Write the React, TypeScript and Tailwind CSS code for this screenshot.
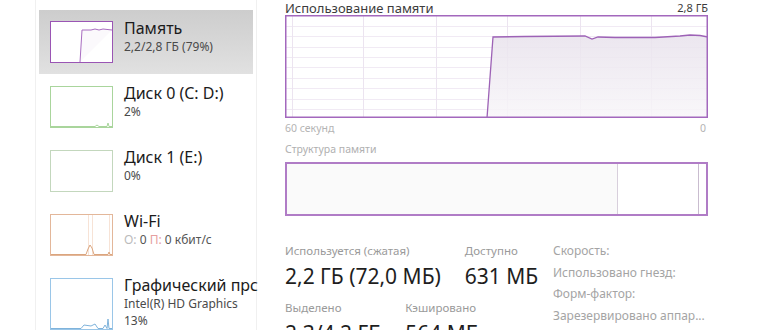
import React from 'react';

// sidebar entries of the performance tab
interface PerfItem {
  title: string;
  lines: string[];
  border: string;
  thumbH: string;
  kind: 'mem' | 'disk0' | 'disk1' | 'wifi' | 'gpu';
  selected?: boolean;
}

const items: PerfItem[] = [
  { title: 'Память', lines: ['2,2/2,8 ГБ (79%)'], border: 'border-[#9a55b4]', thumbH: 'h-[42px]', kind: 'mem', selected: true },
  { title: 'Диск 0 (C: D:)', lines: ['2%'], border: 'border-[#a9d59c]', thumbH: 'h-[42px]', kind: 'disk0' },
  { title: 'Диск 1 (E:)', lines: ['0%'], border: 'border-[#c3d7bd]', thumbH: 'h-[42px]', kind: 'disk1' },
  { title: 'Wi-Fi', lines: ['O: 0 П: 0 кбит/с'], border: 'border-[#e3b79a]', thumbH: 'h-[42px]', kind: 'wifi' },
  { title: 'Графический прс', lines: ['Intel(R) HD Graphics', '13%'], border: 'border-[#9ac6e8]', thumbH: 'h-[52px]', kind: 'gpu' },
];

const Thumb = ({ item }: { item: PerfItem }) => (
  <div className={`w-[63px] ${item.thumbH} border ${item.border} bg-white shrink-0 overflow-hidden`}>
    <svg width="61" height={item.kind === 'gpu' ? 50 : 40} className="block">
      {item.kind === 'mem' && (
        <path d="M29 40 L31 8 L40 8 L44 7 L48 8 L52 7 L61 8" fill="#fbf9fc" stroke="#a86cc0" strokeWidth="1" />
      )}
      {item.kind === 'disk0' && (
        <path d="M0 39.5 L44 39.5 L46 38 L48 39.5 L56 39.5 L57 36 L58 39.5 L61 39.5" fill="none" stroke="#a9d59c" strokeWidth="1" />
      )}
      {item.kind === 'wifi' && (
        <g fill="none" strokeWidth="1">
          <line x1="37.5" y1="0" x2="37.5" y2="40" stroke="#f7e3d6" />
          <line x1="41.5" y1="0" x2="41.5" y2="40" stroke="#f7e3d6" />
          <line x1="58.5" y1="0" x2="58.5" y2="40" stroke="#f7e3d6" />
          <path d="M0 39.5 L35 39.5 L37 34 L39 30 L41 33 L43 39.5 L57 39.5 L58 37 L59 39.5 L61 39.5" stroke="#dba57e" />
        </g>
      )}
      {item.kind === 'gpu' && (
        <path d="M0 49.5 L30 49.5 L33 46 L40 47 L44 45 L47 49.5 L52 49.5 L54 46 L56 49.5 L57 40 L58 49.5 L61 49.5" fill="none" stroke="#7fb3db" strokeWidth="1" />
      )}
    </svg>
  </div>
);

const vLines = [7, 78, 151, 222, 295, 366];
const hLines = [11, 21, 32, 42, 52, 63, 73, 84, 94];

const UsageGraph = () => (
  <svg width="423" height="103" className="block">
    <defs>
      <linearGradient id="memfill" x1="0" y1="0" x2="0" y2="1">
        <stop offset="0" stopColor="#e8e2ec" />
        <stop offset="1" stopColor="#f8f6f9" />
      </linearGradient>
    </defs>
    <rect x="0" y="0" width="423" height="103" fill="#ffffff" />
    {hLines.map((y) => (
      <line key={`h${y}`} x1="0" y1={y + 0.5} x2="423" y2={y + 0.5} stroke="#f1eaf4" />
    ))}
    {vLines.map((x) => (
      <line key={`v${x}`} x1={x + 0.5} y1="0" x2={x + 0.5} y2="103" stroke="#ece4f0" />
    ))}
    <path
      d="M202 103 L208 22 L240 21.5 L300 21 L307 24 L313 22 L330 22.5 L370 22.5 L395 21 L405 20 L415 20.5 L423 22 L423 103 Z"
      fill="url(#memfill)"
      fillOpacity="0.85"
    />
    <path
      d="M202 103 L208 22 L240 21.5 L300 21 L307 24 L313 22 L330 22.5 L370 22.5 L395 21 L405 20 L415 20.5 L423 22"
      fill="none"
      stroke="#9d62b6"
      strokeWidth="1.3"
    />
    <rect x="0.75" y="0.75" width="421.5" height="101.5" fill="none" stroke="#a368bd" strokeWidth="1.5" />
  </svg>
);

const Stat = ({ label, value }: { label: string; value: string }) => (
  <div className="flex flex-col">
    <span className="text-[11.5px] leading-[14px] text-[#9a9a9a] whitespace-nowrap">{label}</span>
    <span className="text-[21px] leading-[26px] text-[#1e1e1e] mt-[5px] whitespace-nowrap">{value}</span>
  </div>
);

export default function App() {
  return (
    <div className="flex w-[770px] h-[330px] overflow-hidden bg-white font-['Noto_Sans','Open_Sans',sans-serif]">
      {/* left strip */}
      <div className="w-[36px] h-full border-r border-[#f0f0f0] shrink-0" />

      {/* sidebar */}
      <div className="w-[221px] h-full border-r border-[#f0f0f0] shrink-0 pt-[10px] px-[3px]">
        {items.map((item) => (
          <div
            key={item.title}
            className={`flex gap-[11px] pl-[11px] pt-[11px] h-[64px] ${
              item.selected ? 'h-[62px] bg-gradient-to-b from-[#cdcdcd] to-[#e1e1e1] mb-[1px]' : ''
            }`}
          >
            <Thumb item={item} />
            <div className="flex flex-col -mt-[3px] whitespace-nowrap">
              <span className="text-[16px] leading-[20px] text-[#1b1b1b]">{item.title}</span>
              {item.kind === 'wifi' ? (
                <span className="text-[12px] leading-[16px] text-[#555] mt-[1px]">
                  <span className="text-[#bbb]">O:</span> 0 <span className="text-[#e6a0a0]">П:</span> 0 кбит/с
                </span>
              ) : (
                item.lines.map((l) => (
                  <span key={l} className="text-[12px] leading-[16px] text-[#4a4a4a] mt-[1px]">
                    {l}
                  </span>
                ))
              )}
            </div>
          </div>
        ))}
      </div>

      {/* main panel */}
      <div className="flex flex-col pl-[28px] w-[451px] h-full overflow-hidden">
        <div className="shrink-0 flex justify-between items-end h-[14px] text-[13px] leading-[15px] text-[#3c3c3c]">
          <span className="-mb-[2px]">Использование памяти</span>
          <span className="text-[11px] -mb-[1px]">2,8 ГБ</span>
        </div>
        <div className="shrink-0 mt-[1px]">
          <UsageGraph />
        </div>
        <div className="shrink-0 flex justify-between text-[10.5px] leading-[14px] text-[#b4b4b4] mt-[3px]">
          <span>60 секунд</span>
          <span className="pr-[2px]">0</span>
        </div>
        <div className="shrink-0 text-[10.5px] leading-[14px] text-[#b0b0b0] mt-[7px]">Структура памяти</div>
        <div className="shrink-0 mt-[6px] h-[54px] flex border-2 border-[#b07cc6]">
          <div className="w-[331px] bg-[#fafafa] border-r border-[#d8cfdc]" />
          <div className="w-[81px] bg-white border-r border-[#c9bccf]" />
          <div className="flex-1 bg-white" />
        </div>

        {/* stats */}
        <div className="shrink-0 flex mt-[28px]">
          <div className="w-[268px] flex flex-col">
            <div className="flex gap-[24px]">
              <Stat label="Используется (сжатая)" value="2,2 ГБ (72,0 МБ)" />
              <Stat label="Доступно" value="631 МБ" />
            </div>
            <div className="flex gap-[24px] mt-[12px]">
              <Stat label="Выделено" value="2,3/4,2 ГБ" />
              <Stat label="Кэшировано" value="564 МБ" />
            </div>
          </div>
          <div className="flex flex-col text-[12px] leading-[14px] text-[#a4a4a4] gap-[7.5px] whitespace-nowrap">
            <span>Скорость:</span>
            <span>Использовано гнезд:</span>
            <span>Форм-фактор:</span>
            <span>Зарезервировано аппар...</span>
          </div>
        </div>
      </div>
    </div>
  );
}
